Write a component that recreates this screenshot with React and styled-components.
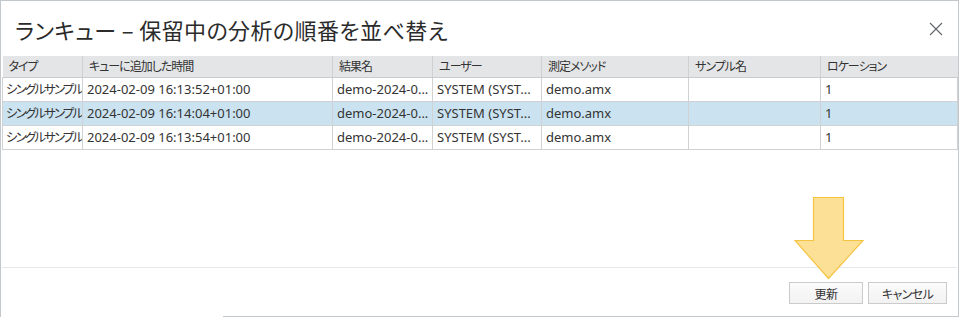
import styled, { createGlobalStyle } from "styled-components";

const GlobalStyle = createGlobalStyle`
    * { box-sizing: border-box; }
    body {
        margin: 0;
        background: #ffffff;
        font-family: "Noto Sans", "Noto Sans CJK JP", sans-serif;
        color: #333333;
    }
`

const columns = [
    { title: "タイプ", width: 80 },
    { title: "キューに追加した時間", width: 250 },
    { title: "結果名", width: 100 },
    { title: "ユーザー", width: 109 },
    { title: "測定メソッド", width: 147 },
    { title: "サンプル名", width: 132 },
    { title: "ロケーション", width: 137 },
]

const rows = [
    { time: "2024-02-09 16:13:52+01:00", selected: false },
    { time: "2024-02-09 16:14:04+01:00", selected: true },
    { time: "2024-02-09 16:13:54+01:00", selected: false },
]

function DownArrow() {
    return (
        <Arrow width="72" height="86" viewBox="0 0 72 86">
            <path
                d="M19.5 1.5 H49.5 V44.5 H69 L34.5 82.5 L1 44.5 H19.5 Z"
                fill="#fbe096"
                stroke="#f6c443"
                strokeWidth="1.2"
                strokeLinejoin="miter"
            />
        </Arrow>
    )
}

export default function App() {
    return (
        <>
            <GlobalStyle />
            <Dialog>
                <TitleBar>
                    <Title>ランキュー – 保留中の分析の順番を並べ替え</Title>
                    <Close aria-label="close">
                        <svg width="14" height="14" viewBox="0 0 14 14">
                            <path d="M1 1 L13 13 M13 1 L1 13" stroke="#5f6368" strokeWidth="1.1" fill="none" />
                        </svg>
                    </Close>
                </TitleBar>

                <Grid>
                    <Table>
                        <colgroup>
                            {columns.map(c => <col key={c.title} style={{ width: c.width }} />)}
                        </colgroup>
                        <thead>
                            <tr>
                                {columns.map(c => <Th key={c.title}>{c.title}</Th>)}
                            </tr>
                        </thead>
                        <tbody>
                            {rows.map(r => (
                                <Row key={r.time} $selected={r.selected}>
                                    <Td $jp>シングルサンプル</Td>
                                    <Td>{r.time}</Td>
                                    <Td>demo-2024-0...</Td>
                                    <Td>SYSTEM (SYST...</Td>
                                    <Td>demo.amx</Td>
                                    <Td></Td>
                                    <Td>1</Td>
                                </Row>
                            ))}
                        </tbody>
                    </Table>
                </Grid>

                <Footer>
                    <Button>更新</Button>
                    <Button $wide>キャンセル</Button>
                </Footer>
                <BottomEdge />
                <DownArrow />
            </Dialog>
        </>
    );
}

const Dialog = styled.div`
    position: relative;
    width: 959px;
    height: 317px;
    border-top: 1px solid #c3c8cc;
    border-left: 1px solid #c3c8cc;
    border-right: 1px solid #c3c8cc;
    background: #ffffff;

    display: flex;
    flex-direction: column;
`

const TitleBar = styled.div`
    height: 55px;
    padding: 0 14px 0 14px;

    display: flex;
    align-items: center;
    justify-content: space-between;
`

const Title = styled.h1`
    margin: 0;
    font-family: "Noto Sans CJK JP", sans-serif;
    font-feature-settings: "palt";
    font-weight: 400;
    font-size: 22px;
    color: #2b2b2b;
    letter-spacing: 0.4px;
`

const Close = styled.div`
    width: 14px;
    height: 14px;
    margin-right: 1px;
    display: flex;
`

const Grid = styled.div`
    height: 212px;
    margin: 0 0 0 1px;
    width: 955px;
    border-bottom: 1px solid #e6e7e8;
`

const Table = styled.table`
    border-collapse: collapse;
    table-layout: fixed;
    width: 955px;
`

const Th = styled.th`
    height: 21px;
    padding: 0 0 1px 6px;
    background: #e4e5e7;
    border-right: 1px solid #cfd1d3;
    border-bottom: 1px solid #c9cbcd;
    text-align: left;
    font-family: "Noto Sans CJK JP", sans-serif;
    font-feature-settings: "palt";
    font-weight: 400;
    font-size: 12px;
    letter-spacing: -1px;
    color: #333333;
    white-space: nowrap;
    overflow: hidden;

    &:last-child { border-right: none; }
`

const Row = styled.tr`
    background: ${p => p.$selected ? "#cbe3f1" : "#ffffff"};
`

const Td = styled.td`
    height: 24px;
    padding: 0 0 1px ${p => p.$jp ? "3px" : "4px"};
    border: 1px solid #cfd1d3;
    border-top: none;
    font-family: ${p => p.$jp ? "\"Noto Sans CJK JP\"" : "\"Noto Sans\", \"Noto Sans CJK JP\""}, sans-serif;
    font-feature-settings: "palt";
    font-size: ${p => p.$jp ? "12.5px" : "13px"};
    letter-spacing: ${p => p.$jp ? "-1.9px" : "0"};
    color: #333333;
    white-space: nowrap;
    overflow: hidden;
`

const Footer = styled.div`
    height: 48px;
    padding: 14px 11px 0 0;

    display: flex;
    justify-content: flex-end;
    gap: 5px;
`

const Button = styled.div`
    width: ${p => p.$wide ? "79px" : "74px"};
    height: 22px;
    border: 1px solid #cbcbcb;
    background: linear-gradient(#fbfbfb, #f2f2f2);
    font-family: "Noto Sans CJK JP", sans-serif;
    font-feature-settings: "palt";
    font-size: 12px;
    letter-spacing: -0.6px;
    color: #333333;

    display: flex;
    justify-content: center;
    align-items: center;
`

const BottomEdge = styled.div`
    height: 1px;
    margin-left: 222px;
    background: #c3c8cc;
`

const Arrow = styled.svg`
    position: absolute;
    left: 793px;
    top: 195px;
`
